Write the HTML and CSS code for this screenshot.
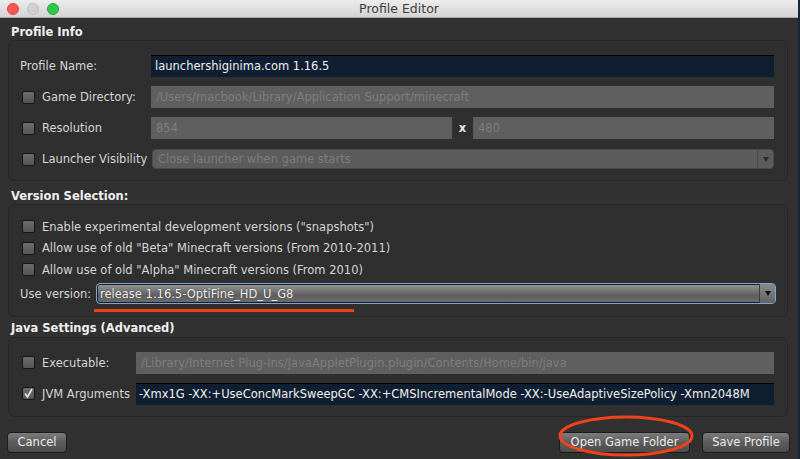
FILE: index.html
```html
<!DOCTYPE html>
<html lang="en">
<head>
    <meta charset="UTF-8">
    <title>Profile Editor</title>
    <link rel="stylesheet" href="styles.css">
</head>
<body>

<div class="window">
    <div class="titlebar">
        <div class="lights">
            <span class="light red"></span>
            <span class="light gray"></span>
            <span class="light green"></span>
        </div>
        <div class="title">Profile Editor</div>
    </div>

    <div class="content">
        <div class="heading">Profile Info</div>
        <div class="panel panel_profile">
            <div class="row">
                <label class="label">Profile Name:</label>
                <div class="field field_on">launchershiginima.com 1.16.5</div>
            </div>
            <div class="row">
                <label class="label"><span class="check"></span>Game Directory:</label>
                <div class="field field_off">/Users/macbook/Library/Application Support/minecraft</div>
            </div>
            <div class="row">
                <label class="label"><span class="check"></span>Resolution</label>
                <div class="field field_off">854</div>
                <span class="times">x</span>
                <div class="field field_off">480</div>
            </div>
            <div class="row">
                <label class="label"><span class="check"></span>Launcher Visibility</label>
                <div class="select select_off">
                    <span class="select_text">Close launcher when game starts</span>
                    <span class="select_btn"><span class="arrow"></span></span>
                </div>
            </div>
        </div>

        <div class="heading heading_version">Version Selection:</div>
        <div class="panel panel_version">
            <div class="crow"><span class="check"></span>Enable experimental development versions ("snapshots")</div>
            <div class="crow"><span class="check"></span>Allow use of old "Beta" Minecraft versions (From 2010-2011)</div>
            <div class="crow"><span class="check"></span>Allow use of old "Alpha" Minecraft versions (From 2010)</div>
            <div class="row row_version">
                <label class="label">Use version:</label>
                <div class="select select_on">
                    <span class="select_text">release 1.16.5-OptiFine_HD_U_G8</span>
                    <span class="select_btn"><span class="arrow"></span></span>
                </div>
                <span class="underline"></span>
            </div>
        </div>

        <div class="heading heading_java">Java Settings (Advanced)</div>
        <div class="panel panel_java">
            <div class="row">
                <label class="label"><span class="check"></span>Executable:</label>
                <div class="field field_off">/Library/Internet Plug-Ins/JavaAppletPlugin.plugin/Contents/Home/bin/java</div>
            </div>
            <div class="row">
                <label class="label"><span class="check checked">
                    <svg width="11" height="11" viewBox="0 0 11 11"><path d="M2 5.5 L4.5 9 L9 1" fill="none" stroke="#e6e6e6" stroke-width="1.6"/></svg>
                </span>JVM Arguments</label>
                <div class="field field_on field_jvm">-Xmx1G -XX:+UseConcMarkSweepGC -XX:+CMSIncrementalMode -XX:-UseAdaptiveSizePolicy -Xmn2048M</div>
            </div>
        </div>

        <div class="buttons">
            <button class="btn btn_cancel">Cancel</button>
            <div class="spacer"></div>
            <div class="btn_wrap">
                <button class="btn btn_open">Open Game Folder</button>
                <svg class="circle" width="140" height="46" viewBox="0 0 140 46">
                    <ellipse cx="70" cy="23" rx="66" ry="19" fill="none" stroke="#f0431c" stroke-width="3"/>
                </svg>
            </div>
            <button class="btn btn_save">Save Profile</button>
        </div>
    </div>
</div>

</body>
</html>
```

FILE: styles.css
```css
    * {
        margin: 0;
        padding: 0;
        box-sizing: border-box;
    }
    html, body {
        width: 800px;
        height: 459px;
        overflow: hidden;
        background-color: #17243a;
    }
    body {
        font-family: "DejaVu Sans", sans-serif;
        font-size: 11.5px;
        color: #d6d6d6;
    }
    .window {
        width: 798px;
        height: 459px;
        background-color: #313131;
        display: flex;
        flex-direction: column;
    }

    .titlebar {
        height: 18px;
        flex-shrink: 0;
        background: linear-gradient(#ececec, #d4d4d4);
        border-bottom: 1px solid #a9a9a9;
        display: flex;
        align-items: center;
        position: relative;
    }
    .lights {
        display: flex;
        gap: 8px;
        padding-left: 7px;
    }
    .light {
        width: 12px;
        height: 12px;
        border-radius: 50%;
    }
    .red { background-color: #fc5753; border: 1px solid #de4540; }
    .gray { background-color: #d0d0d0; border: 1px solid #c0c0c0; }
    .green { background-color: #33c748; border: 1px solid #27aa35; }
    .title {
        position: absolute;
        left: 0;
        right: 0;
        text-align: center;
        font-size: 12.5px;
        color: #3c3c3c;
    }

    .content {
        display: flex;
        flex-direction: column;
        padding: 0 10px 0 8px;
    }
    .heading {
        height: 22px;
        padding-top: 7px;
        padding-left: 3px;
        line-height: 15px;
        font-weight: bold;
        color: #f0f0f0;
    }
    .heading_version {
        height: 23px;
        padding-top: 8px;
    }
    .heading_java {
        height: 20px;
        padding-top: 4px;
    }
    .panel {
        border: 1px solid #262626;
        border-radius: 6px;
        background-color: #2f2f2f;
        padding: 14px 13px 10px 11px;
        display: flex;
        flex-direction: column;
        gap: 9px;
    }
    .panel_version {
        gap: 0;
        padding-top: 11px;
        padding-bottom: 11px;
    }
    .panel_java {
        padding-top: 14px;
        padding-bottom: 11px;
    }

    .row {
        display: flex;
        align-items: center;
        height: 22px;
        position: relative;
    }
    .label {
        display: flex;
        align-items: center;
        width: 131px;
        flex-shrink: 0;
        white-space: nowrap;
    }
    .panel_java .label {
        width: 116px;
    }
    .row_version {
        margin-top: 2px;
    }
    .row_version .label {
        width: 76px;
    }
    .check {
        width: 13px;
        height: 13px;
        margin: 0 7px 0 2px;
        border: 1px solid #161616;
        border-radius: 2px;
        background: linear-gradient(#6c6c6c, #545454);
        display: flex;
        align-items: center;
        justify-content: center;
        flex-shrink: 0;
    }
    .crow {
        display: flex;
        align-items: center;
        height: 21.5px;
        white-space: nowrap;
    }

    .field {
        flex: 1;
        height: 22px;
        line-height: 22px;
        padding: 0 5px;
        white-space: nowrap;
        overflow: hidden;
    }
    .field_on {
        background-color: #0f1e31;
        color: #f2f2f2;
        border-top: 1px solid #000;
        line-height: 20px;
        padding-left: 4px;
    }
    .field_jvm {
        padding-left: 3px;
    }
    .field_off {
        background-color: #5f5f5f;
        color: #7e7e7e;
    }
    .times {
        width: 21px;
        text-align: center;
        font-weight: bold;
        color: #e8e8e8;
        flex-shrink: 0;
    }

    .select {
        flex: 1;
        height: 20px;
        display: flex;
        align-items: center;
        border-radius: 4px;
        overflow: hidden;
    }
    .select_text {
        flex: 1;
        padding-left: 5px;
        white-space: nowrap;
    }
    .select_btn {
        width: 16px;
        height: 100%;
        border-left: 1px solid #4a4a4a;
        display: flex;
        align-items: center;
        justify-content: center;
    }
    .arrow {
        width: 0;
        height: 0;
        border-left: 3.5px solid transparent;
        border-right: 3.5px solid transparent;
        border-top: 5px solid #2b2b2b;
    }
    .select_off {
        margin-left: 1px;
        background-color: #5c5c5c;
        border: 1px solid #4b4b4b;
        color: #7c7c7c;
    }
    .select_on {
        height: 21px;
        margin-right: -2px;
        border: 1px solid #7ba6d8;
        box-shadow: inset 0 0 0 1px #1c1c1c;
        background: linear-gradient(#9a9a9a, #767676 35%, #5e5e5e 60%, #6e6e6e);
        color: #f4f4f4;
        text-shadow: 0 0 1px #222;
    }
    .select_on .select_text {
        padding-left: 3px;
    }
    .select_on .select_btn {
        border-left: 1px solid #3c3c3c;
        background: linear-gradient(#8a8a8a, #636363);
    }
    .select_on .arrow {
        border-top-color: #111;
    }
    .underline {
        position: absolute;
        left: 74px;
        top: 26px;
        width: 260px;
        height: 3px;
        background-color: #ef3f1b;
    }

    .buttons {
        display: flex;
        align-items: center;
        margin-top: 15px;
        margin-left: -1px;
        margin-right: -2px;
    }
    .spacer {
        flex: 1;
    }
    .btn {
        height: 21px;
        padding: 0;
        white-space: nowrap;
        font-family: "DejaVu Sans", sans-serif;
        font-size: 11.5px;
        color: #ececec;
        border: 1px solid #1c1c1c;
        border-radius: 4px;
        background: linear-gradient(#7c7c7c, #5c5c5c 50%, #4c4c4c);
    }
    .btn_cancel {
        width: 60px;
    }
    .btn_wrap {
        position: relative;
        display: flex;
    }
    .btn_open {
        width: 131px;
    }
    .btn_save {
        width: 88px;
        margin-left: 12px;
    }
    .circle {
        position: absolute;
        left: -3px;
        top: -19px;
    }
```
